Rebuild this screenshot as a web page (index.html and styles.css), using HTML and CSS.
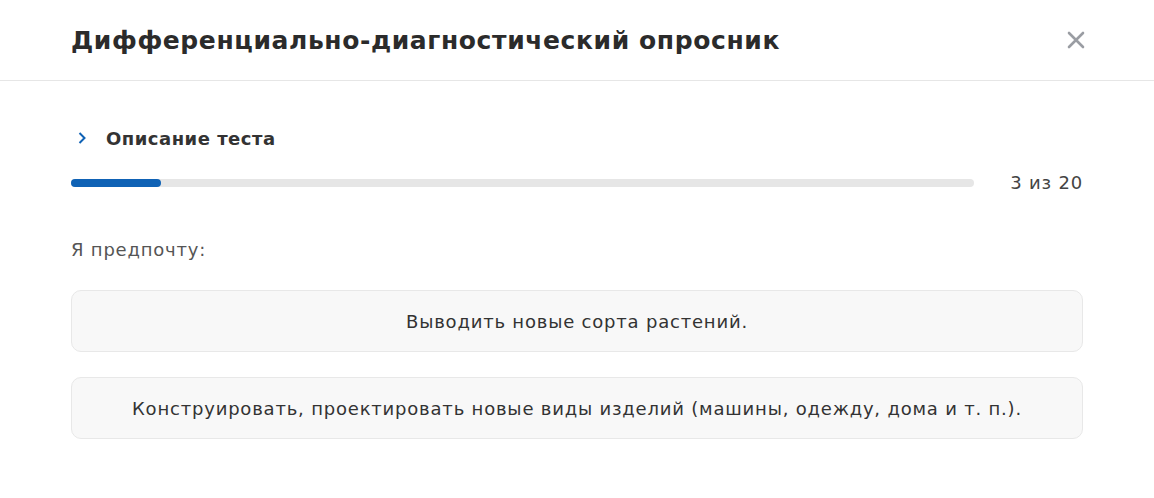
FILE: index.html
```html
<!DOCTYPE html>
<html lang="ru">
<head>
  <meta charset="UTF-8" />
  <meta name="viewport" content="width=device-width, initial-scale=1.0" />
  <title>Дифференциально-диагностический опросник</title>
  <link rel="stylesheet" href="styles.css">
</head>
<body>
  <div class="modal">
    <div class="modal-head">
      <h2 class="modal-title">Дифференциально-диагностический опросник</h2>
      <button class="close" type="button" aria-label="Закрыть">
        <svg width="18" height="18" viewBox="0 0 18 18">
          <path d="M2 2 L16 16 M16 2 L2 16" stroke="#9a9da3" stroke-width="2.6" stroke-linecap="round" />
        </svg>
      </button>
    </div>

    <div class="modal-body">
      <div class="desc">
        <svg class="chev" width="10" height="14" viewBox="0 0 10 14">
          <path d="M2.5 2 L7.5 7 L2.5 12" fill="none" stroke="#0f62b5" stroke-width="2" />
        </svg>
        <span>Описание теста</span>
      </div>

      <div class="progress-row">
        <div class="progress">
          <div class="progress-fill" style="width: 10%"></div>
        </div>
        <div class="counter">3 из 20</div>
      </div>

      <p class="question">Я предпочту:</p>

      <div class="answers">
        <button class="answer" type="button">Выводить новые сорта растений.</button>
        <button class="answer" type="button">Конструировать, проектировать новые виды изделий (машины, одежду, дома и т. п.).</button>
      </div>
    </div>
  </div>
</body>
</html>
```

FILE: styles.css
```css
body {
  margin: 0;
  background: #fff;
  font-family: "DejaVu Sans", "Noto Sans", sans-serif;
  color: #333;
  letter-spacing: 0.8px;
}

.modal {
  width: 1154px;
}

.modal-head {
  display: flex;
  align-items: center;
  justify-content: space-between;
  height: 81px;
  padding: 0 65px 0 71px;
  border-bottom: 1px solid #e6e6e6;
  box-sizing: border-box;
}

.modal-title {
  margin: 0;
  font-size: 25px;
  font-weight: 600;
  letter-spacing: 0.6px;
  color: #2b2b2b;
}

.close {
  border: 0;
  background: none;
  padding: 4px;
  cursor: pointer;
  display: flex;
}

.modal-body {
  padding: 42px 71px 0 71px;
}

.desc {
  display: flex;
  align-items: center;
  gap: 19px;
  height: 30px;
  padding-left: 6px;
  font-size: 18px;
  font-weight: 600;
  letter-spacing: 0.5px;
  color: #333;
}

.progress-row {
  display: flex;
  align-items: center;
  margin-top: 19px;
}

.progress {
  flex: 1;
  height: 8px;
  border-radius: 4px;
  background: #e6e6e6;
  margin-right: 36px;
}

.progress-fill {
  height: 100%;
  border-radius: 4px;
  background: #0f62b5;
}

.counter {
  font-size: 18px;
  color: #444;
}

.question {
  margin: 46px 0 0 0;
  font-size: 18px;
  color: #555;
}

.answers {
  display: flex;
  flex-direction: column;
  gap: 25px;
  margin-top: 30px;
}

.answer {
  height: 62px;
  border: 1px solid #e8e8e8;
  border-radius: 10px;
  background: #f8f8f8;
  font-family: inherit;
  font-size: 18px;
  letter-spacing: inherit;
  color: #333;
  cursor: pointer;
}
```
